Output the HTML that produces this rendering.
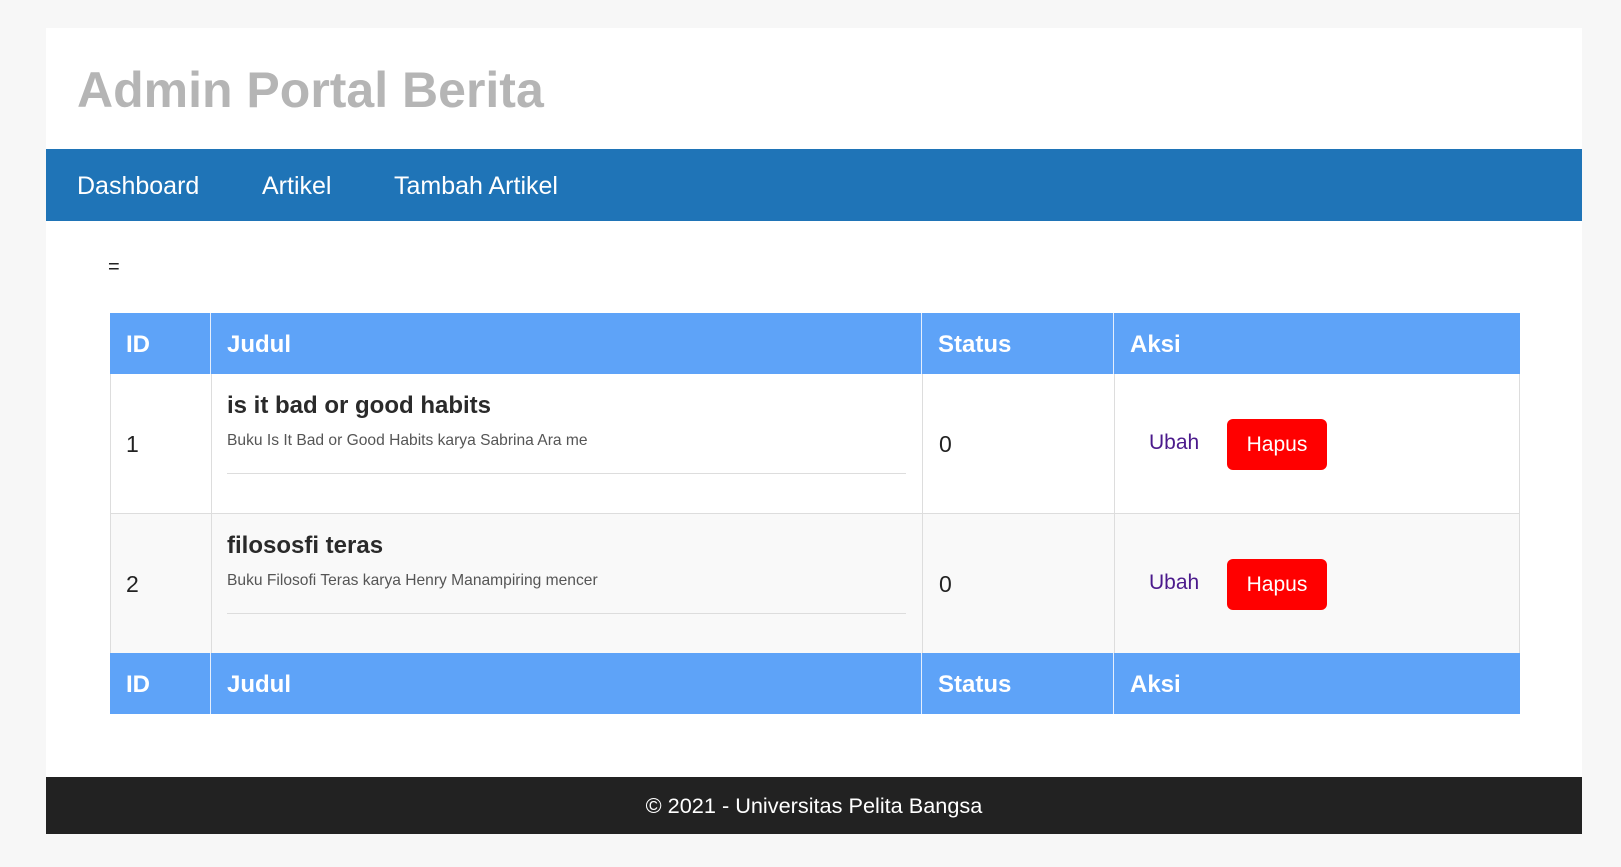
<!DOCTYPE html>
<html><head><style>
*{margin:0;padding:0;box-sizing:border-box}
body{width:1621px;height:867px;background:#f7f7f7;font-family:"Liberation Sans",Arial,sans-serif;position:relative;overflow:hidden}
.c{position:absolute;left:46px;top:28px;width:1536px;height:806px;background:#fff}
.t{position:absolute;left:31px;top:33px;font-size:50px;font-weight:bold;color:#b5b5b5}
.nav{position:absolute;left:0;top:121px;width:1536px;height:72px;background:#1f74b7}
.nav span{position:absolute;top:23px;font-size:25px;color:#fff}
.eq{position:absolute;left:62px;top:228px;font-size:20px;color:#222}
.ft{position:absolute;left:0;top:749px;width:1536px;height:57px;background:#222;color:#fff;font-size:21.7px;text-align:center;line-height:58px}
.r{position:absolute;left:64px;width:1410px}
.h{background:#5ea3f8;height:61px;color:#fff;font-weight:bold;font-size:24px}
.cell{position:absolute;top:0;height:100%;border-right:1px solid #ddd}
.h .cell{border-right:1px solid #e5eefc}
.h .cell span{position:absolute;left:16px;top:18px}
.b{height:140px;border-bottom:1px solid #ddd;border-left:1px solid #ddd;border-right:1px solid #ddd}
.b .n{position:absolute;top:57px;font-size:23px;color:#222}
.tt{position:absolute;left:15px;top:18px;font-size:24px;font-weight:bold;color:#2a2a2a}
.d{position:absolute;left:15px;top:58px;font-size:15.6px;color:#555}
.hr{position:absolute;left:15px;right:16px;top:99px;border-top:1px solid #ddd}
.u{position:absolute;left:34px;top:57px;font-size:21px;color:#4b1a8c}
.bt{position:absolute;left:112px;top:45px;width:100px;height:51px;background:#f00;border-radius:6px;color:#fff;font-size:21px;text-align:center;line-height:51px}
</style></head><body>
<div class="c">
<div class="t">Admin Portal Berita</div>
<div class="nav"><span style="left:31px">Dashboard</span><span style="left:216px">Artikel</span><span style="left:348px">Tambah Artikel</span></div>
<div class="eq">=</div>

<div class="r h" style="top:285px">
<div class="cell" style="left:0;width:101px"><span>ID</span></div>
<div class="cell" style="left:101px;width:711px"><span>Judul</span></div>
<div class="cell" style="left:812px;width:192px"><span>Status</span></div>
<div class="cell" style="left:1004px;width:406px;border:none"><span>Aksi</span></div>
</div>

<div class="r b" style="top:346px;background:#fff">
<div class="cell" style="left:0;width:101px"><span class="n" style="left:15px">1</span></div>
<div class="cell" style="left:101px;width:711px"><div class="tt">is it bad or good habits</div><div class="d">Buku Is It Bad or Good Habits karya Sabrina Ara me</div><div class="hr"></div></div>
<div class="cell" style="left:812px;width:192px"><span class="n" style="left:16px">0</span></div>
<div class="cell" style="left:1004px;width:404px;border:none"><span class="u">Ubah</span><span class="bt">Hapus</span></div>
</div>

<div class="r b" style="top:486px;background:#f9f9f9">
<div class="cell" style="left:0;width:101px"><span class="n" style="left:15px">2</span></div>
<div class="cell" style="left:101px;width:711px"><div class="tt">filososfi teras</div><div class="d">Buku Filosofi Teras karya Henry Manampiring mencer</div><div class="hr"></div></div>
<div class="cell" style="left:812px;width:192px"><span class="n" style="left:16px">0</span></div>
<div class="cell" style="left:1004px;width:404px;border:none"><span class="u">Ubah</span><span class="bt">Hapus</span></div>
</div>

<div class="r h" style="top:625px">
<div class="cell" style="left:0;width:101px"><span>ID</span></div>
<div class="cell" style="left:101px;width:711px"><span>Judul</span></div>
<div class="cell" style="left:812px;width:192px"><span>Status</span></div>
<div class="cell" style="left:1004px;width:406px;border:none"><span>Aksi</span></div>
</div>

<div class="ft">© 2021 - Universitas Pelita Bangsa</div>
</div>
</body></html>
